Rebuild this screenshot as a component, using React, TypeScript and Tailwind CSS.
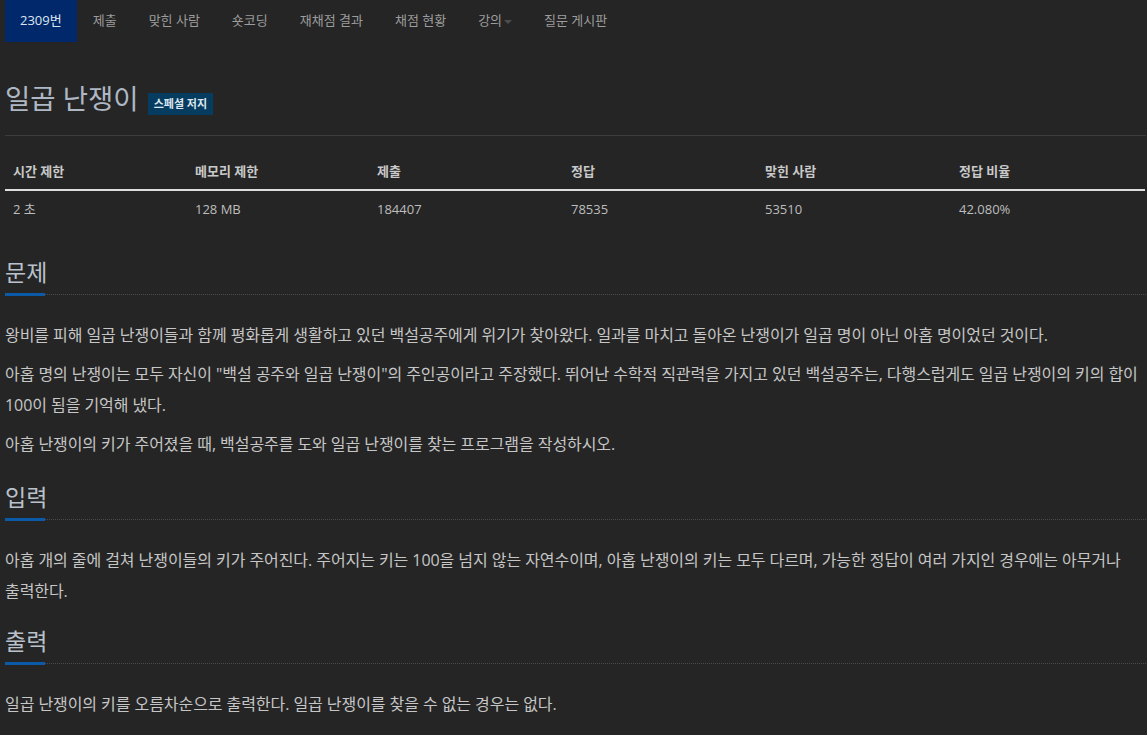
import React from "react";

const FONT = "font-['Open_Sans','Noto_Sans_CJK_KR',sans-serif]";

const navItems = ["제출", "맞힌 사람", "숏코딩", "재채점 결과", "채점 현황", "강의", "질문 게시판"];

const stats = [
  { label: "시간 제한", value: "2 초" },
  { label: "메모리 제한", value: "128 MB" },
  { label: "제출", value: "184407" },
  { label: "정답", value: "78535" },
  { label: "맞힌 사람", value: "53510" },
  { label: "정답 비율", value: "42.080%" },
];

function SectionTitle({ children }: { children: React.ReactNode }) {
  return (
    <div className="relative">
      <h2 className="text-[23px] leading-[34px] text-[#b9c2cc] pb-[5px]">{children}</h2>
      <div className="border-b border-dotted border-[#4a4a4a]" />
      <div className="absolute left-0 bottom-[-1px] h-[3px] w-[40px] bg-[#0b5aa8]" />
    </div>
  );
}

export default function App() {
  return (
    <div className={`min-h-screen bg-[#252525] ${FONT} pl-[5px] pr-[1px]`}>
      <nav className="flex h-[42px] items-stretch text-[13px]">
        <div className="flex items-center bg-[#01286b] px-[15px] text-[#dde5f0]">2309번</div>
        {navItems.map((item) => (
          <div key={item} className="flex items-center px-[16px] text-[#9c9c9c]">
            {item}
            {item === "강의" && (
              <span className="ml-[2px] mt-[2px] h-0 w-0 border-x-[4px] border-t-[4px] border-x-transparent border-t-[#4d4d4d]" />
            )}
          </div>
        ))}
      </nav>

      <div className="flex items-end gap-[9px] pt-[38px] pb-[17px]">
        <h1 className="text-[27.5px] leading-[38px] text-[#aeb8c4]">일곱 난쟁이</h1>
        <span className="mb-[3px] bg-[#063c5f] px-[6px] py-[3px] text-[11px] font-bold leading-[16px] text-[#dde6ee]">
          스페셜 저지
        </span>
      </div>
      <div className="border-t border-[#3c3c3c]" />

      <div className="mt-[25px] grid grid-cols-[182px_182px_194px_194px_194px_194px]">
        {stats.map((s) => (
          <div key={s.label} className="border-b-2 border-[#dedede] px-[8px] pb-[8px] text-[13px] font-bold leading-[20px] text-[#c9c9c9]">
            {s.label}
          </div>
        ))}
        {stats.map((s) => (
          <div key={s.label + "v"} className="px-[8px] pt-[8px] text-[13px] leading-[20px] text-[#bdbdbd]">
            {s.value}
          </div>
        ))}
      </div>

      <section className="mt-[36px]">
        <SectionTitle>문제</SectionTitle>
        <div className="mt-[25px] break-keep text-[16px] leading-[31px] tracking-[-0.004em] text-[#c6c6c6]">
          <p className="mb-[8px]">
            왕비를 피해 일곱 난쟁이들과 함께 평화롭게 생활하고 있던 백설공주에게 위기가 찾아왔다. 일과를 마치고 돌아온 난쟁이가 일곱 명이 아닌 아홉 명이었던 것이다.
          </p>
          <p className="mb-[8px]">
            아홉 명의 난쟁이는 모두 자신이 "백설 공주와 일곱 난쟁이"의 주인공이라고 주장했다. 뛰어난 수학적 직관력을 가지고 있던 백설공주는, 다행스럽게도 일곱 난쟁이의 키의 합이 100이 됨을 기억해 냈다.
          </p>
          <p>아홉 난쟁이의 키가 주어졌을 때, 백설공주를 도와 일곱 난쟁이를 찾는 프로그램을 작성하시오.</p>
        </div>
      </section>

      <section className="mt-[20px]">
        <SectionTitle>입력</SectionTitle>
        <div className="mt-[25px] break-keep text-[16px] leading-[31px] tracking-[-0.004em] text-[#c6c6c6]">
          <p>
            아홉 개의 줄에 걸쳐 난쟁이들의 키가 주어진다. 주어지는 키는 100을 넘지 않는 자연수이며, 아홉 난쟁이의 키는 모두 다르며, 가능한 정답이 여러 가지인 경우에는 아무거나 출력한다.
          </p>
        </div>
      </section>

      <section className="mt-[17px]">
        <SectionTitle>출력</SectionTitle>
        <div className="mt-[25px] break-keep text-[16px] leading-[31px] tracking-[-0.004em] text-[#c6c6c6]">
          <p>일곱 난쟁이의 키를 오름차순으로 출력한다. 일곱 난쟁이를 찾을 수 없는 경우는 없다.</p>
        </div>
      </section>
    </div>
  );
}
